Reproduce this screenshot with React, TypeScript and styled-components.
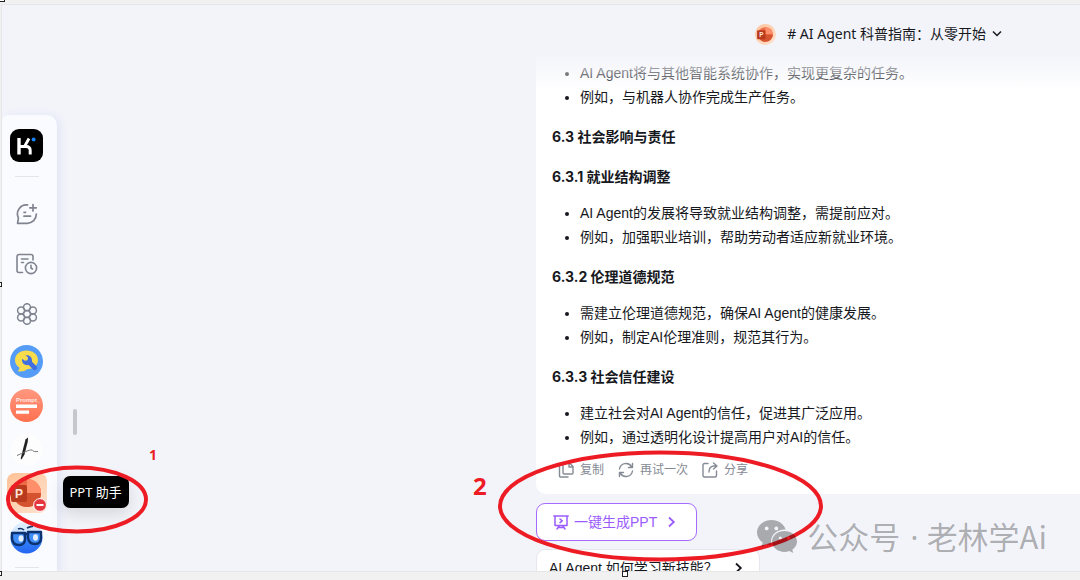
import React from "react";
import styled, { createGlobalStyle } from "styled-components";

const GlobalStyle = createGlobalStyle`
  * { box-sizing: border-box; }
  body {
    margin: 0;
    background: #f1f1f1;
    color: #16181d;
    font: 14px/24px "Liberation Sans", "Noto Sans CJK SC", sans-serif;
  }
  button { font: inherit; color: inherit; border: 0; padding: 0; background: none; cursor: pointer; white-space: nowrap; }
`;

const Frame = styled.div`
  position: relative;
  height: 100vh;
  display: flex;
  flex-direction: column;
  padding: 4px 0 8px 1px;
  overflow: hidden;
`;

const Workspace = styled.div`
  flex: 1;
  min-height: 0;
  display: grid;
  grid-template-columns: 55px minmax(0, 479fr) minmax(0, 544fr);
  overflow: hidden;
  background: #f3f4fa;
  border: solid #e6e6e8;
  border-width: 1px 0 1px 1px;
`;

const Sidebar = styled.nav`
  display: flex;
  flex-direction: column;
  align-items: center;
  margin-top: 110px;
  padding: 14px 6px 0 0;
  background: #fafbff;
  border-radius: 6px 10px 0 0;
  box-shadow: 3px 0 8px rgba(60, 90, 200, 0.09);
`;

const LogoLink = styled.a`
  display: block;
  height: 33px;
  svg { display: block; }
`;

const Divider = styled.hr`
  width: 24px;
  height: 1px;
  margin: 14px 0 12px;
  border: 0;
  background: #e4e5ea;
  flex: none;
`;

const LastDivider = styled(Divider)`
  margin: 8px 0 0;
`;

const NavButton = styled.button<{ $tall?: boolean }>`
  position: relative;
  flex: none;
  width: 40px;
  height: ${(p) => (p.$tall ? 50 : 44)}px;
  display: grid;
  place-items: center;
  color: #7f848f;
`;

const StopBadge = styled.svg`
  position: absolute;
  right: 0;
  bottom: 3px;
`;

const Tooltip = styled.span`
  position: absolute;
  left: 56px;
  top: 5px;
  z-index: 3;
  padding: 4px 7px;
  border-radius: 7px;
  background: #000;
  color: #fff;
  font: 13px/24px "Noto Sans", "Noto Sans CJK SC", sans-serif;
  box-shadow: 0 6px 16px rgba(0, 0, 0, 0.12);
`;

const Canvas = styled.div`
  padding: 404px 0 0 16px;
`;

const ScrollThumb = styled.div`
  width: 4px;
  height: 26px;
  border-radius: 2px;
  background: #c6c7ca;
`;

const Chat = styled.main`
  display: flex;
  flex-direction: column;
  align-items: flex-start;
  min-width: 0;
`;

const Header = styled.header`
  position: relative;
  align-self: stretch;
  flex: none;
  display: flex;
  justify-content: flex-end;
  height: 49px;
  padding: 9px 78px 0 0;
  &::after {
    content: "";
    position: absolute;
    inset: 100% 0 auto 0;
    height: 36px;
    background: linear-gradient(#f3f4fa, rgba(243, 244, 250, 0));
  }
`;

const TitleButton = styled.button`
  display: flex;
  align-items: center;
  height: 40px;
  font-family: "Noto Sans", "Noto Sans CJK SC", sans-serif;
  > svg:first-child { margin-right: 11px; }
  > svg:last-child { margin-left: 6px; }
`;

const Message = styled.article`
  align-self: stretch;
  flex: none;
  padding: 7px 16px 15px;
  background: #fff;
  border-bottom-left-radius: 10px;
`;

const Heading = styled.h3`
  margin: 16px 0 12px;
  font: bold 14px/24px Inter, "Noto Sans CJK SC", sans-serif;
  & + & { margin-top: 16px; }
`;

const Bullets = styled.ul`
  margin: 0;
  padding-left: 28px;
`;

const Actions = styled.div`
  display: flex;
  gap: 14px;
  margin-top: 12px;
  padding-left: 6px;
`;

const ActionButton = styled.button`
  display: flex;
  align-items: center;
  gap: 6px;
  color: #858a94;
  font-size: 12px;
  line-height: 18px;
`;

const GenerateButton = styled.button`
  display: flex;
  align-items: center;
  flex: none;
  height: 38px;
  margin-top: 9px;
  padding: 0 20px 0 16px;
  border: 1px solid #a56bff;
  border-radius: 9px;
  background: #fff;
  color: #9a5cff;
  > svg:first-child { margin-right: 5px; }
  > svg:last-child { margin-left: 10px; }
`;

const Suggestion = styled.button`
  display: flex;
  align-items: center;
  flex: none;
  gap: 16px;
  height: 38px;
  margin-top: 8px;
  padding: 0 16px 0 12px;
  border: 1px solid #e6e7ec;
  border-radius: 9px;
  background: #fff;
`;

const Markup = styled.svg`
  position: absolute;
  left: 0;
  top: 0;
  z-index: 4;
  width: 100%;
  height: 100%;
  pointer-events: none;
`;

const Note = styled.span<{ $x: number; $y: number; $size: number }>`
  position: absolute;
  left: ${(p) => p.$x}px;
  top: ${(p) => p.$y}px;
  color: #ed1c24;
  font: bold ${(p) => p.$size}px/24px "Noto Sans", sans-serif;
`;

const Watermark = styled.div`
  position: absolute;
  right: 33px;
  bottom: 22px;
  z-index: 5;
  display: flex;
  align-items: center;
  gap: 9px;
  color: rgba(0, 0, 0, 0.3);
  font: 31px/42px "Noto Sans CJK SC", sans-serif;
  white-space: nowrap;
`;

const MiddleDot = styled.span`
  margin: 0 8px 0 10px;
  font-family: "Noto Sans", sans-serif;
`;

const PptMark = ({ size, round }: { size: number; round?: boolean }) => (
  <svg width={size} height={size} viewBox="0 0 40 40">
    <defs>
      <linearGradient id="pptBg" x1="0" y1="0" x2="1" y2="1">
        <stop offset="0" stopColor="#ffc196" />
        <stop offset="1" stopColor="#ffe3cf" />
      </linearGradient>
    </defs>
    <rect width="40" height="40" rx={round ? 20 : 8} fill="url(#pptBg)" />
    <circle cx="20" cy="20" r="14" fill="#ed6c47" />
    <path d="M20 6a14 14 0 0 1 14 14H20z" fill="#ff8f6b" />
    <path d="M6 20a14 14 0 0 0 28 0z" fill="#d6532f" />
    <rect x="4" y="12" width="16" height="17" rx="2" fill="#b93a1c" />
    <text x="12" y="25" fontSize="12" fontWeight="bold" fill="#ffe6dc" textAnchor="middle" fontFamily="Liberation Sans, sans-serif">P</text>
  </svg>
);

const Line = ({ size = 16, w = 1.4, children }: { size?: number; w?: number; children: React.ReactNode }) => (
  <svg width={size} height={size} viewBox={`0 0 ${size} ${size}`} fill="none" stroke="currentColor" strokeWidth={w} strokeLinecap="round" strokeLinejoin="round">
    {children}
  </svg>
);

const Chevron = () => (
  <svg width="9" height="12" viewBox="0 0 9 12" fill="none" stroke="currentColor" strokeWidth="1.8">
    <path d="M2 1.5 6.8 6 2 10.5" />
  </svg>
);

const cells = [[11, 11], [11, 4.2], [11, 17.8], [5.1, 7.6], [16.9, 7.6], [5.1, 14.4], [16.9, 14.4]];

const sections = [
  { title: "6.3.1 就业结构调整", items: ["AI Agent的发展将导致就业结构调整，需提前应对。", "例如，加强职业培训，帮助劳动者适应新就业环境。"] },
  { title: "6.3.2 伦理道德规范", items: ["需建立伦理道德规范，确保AI Agent的健康发展。", "例如，制定AI伦理准则，规范其行为。"] },
  { title: "6.3.3 社会信任建设", items: ["建立社会对AI Agent的信任，促进其广泛应用。", "例如，通过透明化设计提高用户对AI的信任。"] },
];

export default function App() {
  return (
    <Frame>
      <GlobalStyle />
      <Workspace>
        <Sidebar>
          <LogoLink href="#" aria-label="Kimi">
            <svg width="33" height="33" viewBox="0 0 33 33">
              <rect width="33" height="33" rx="9" fill="#000" />
              <g fill="none" stroke="#fff">
                <path d="M9 9v16.500" strokeWidth="3.400" />
                <path d="M9 17.500h5.500L19 9.500" strokeWidth="2.800" />
                <path d="M13.500 17.500h2.500q4.200 0 4.200 4v4" strokeWidth="3" />
              </g>
              <circle cx="23.600" cy="10.400" r="2" fill="#1783ff" />
            </svg>
          </LogoLink>
          <Divider />
          <NavButton $tall aria-label="新建会话">
            <Line size={22} w={1.7}>
              <path d="M11.500 1.900A9 9 0 0 0 2.400 14.800L1.600 20.300H11a9 9 0 0 0 9.300-9.300" />
              <path d="M17 1.500v6.500M13.800 4.800h6.500M8 9.300h1.500M8 13.200h6.500" />
            </Line>
          </NavButton>
          <NavButton $tall aria-label="历史会话">
            <Line size={22} w={1.6}>
              <path d="M17 7V3.500a2 2 0 0 0-2-2H3a2 2 0 0 0-2 2v14a2 2 0 0 0 2 2h3.500M5.500 6h6.500M5.500 9.500h2" />
              <circle cx="15" cy="15" r="5.600" />
              <path d="M15 12.300V15l1.500 1" />
            </Line>
          </NavButton>
          <NavButton $tall aria-label="智能体">
            <Line size={22} w={1.5}>
              {cells.map(([x, y]) => (
                <circle key={`${x}-${y}`} cx={x} cy={y} r="3.500" />
              ))}
            </Line>
          </NavButton>
          <NavButton aria-label="工具助手">
            <svg width="33" height="33" viewBox="0 0 33 33">
              <circle cx="16.500" cy="16.500" r="16.500" fill="#559cf7" />
              <path d="M16.500 5.500c6.500 0 11.500 4 11.500 9.500s-5 9-11 9.300c-2 1.900-5 2.700-9.500 2 1.400-1 2-2.300 1.800-3.800C6.300 20.700 5 18 5 15c0-5.500 5-9.500 11.500-9.500z" fill="#f8dc4c" />
              <path d="m18.500 16.500 6.300 6.300" stroke="#3f6fe0" strokeWidth="4.600" strokeLinecap="round" />
              <circle cx="17" cy="15.200" r="5" fill="#3f6fe0" />
              <path d="m10.500 12.500 3.500-3.500 4 3.500-.5 2.700-2.700.5z" fill="#f8dc4c" />
            </svg>
          </NavButton>
          <NavButton aria-label="提示词助手">
            <svg width="33" height="33" viewBox="0 0 33 33">
              <defs>
                <linearGradient id="promptBg" x2="0" y2="1">
                  <stop offset="0" stopColor="#ff9880" />
                  <stop offset="1" stopColor="#ff704f" />
                </linearGradient>
              </defs>
              <circle cx="16.500" cy="16.500" r="16.500" fill="url(#promptBg)" />
              <text x="6" y="13" fontSize="6" fontWeight="bold" fill="#ffe9e3" fontFamily="Liberation Sans, sans-serif">Prompt_</text>
              <path d="M6 15.500h21v3.500H6zM6 21.500h13v3.200H6z" fill="#fff" />
            </svg>
          </NavButton>
          <NavButton aria-label="写作助手">
            <svg width="33" height="33" viewBox="0 0 33 33">
              <circle cx="16.500" cy="16.500" r="16" fill="#fdfdfd" />
              <path d="M15.500 6.500 18 4.500l-.2 4-3.300 13-3 5-.8-1 2-8z" fill="#222" />
              <path d="M7 22.500c6-2.500 12-6 15-5.500 1.500.5 0 2 6 1.500" fill="none" stroke="#777" strokeWidth="1" />
            </svg>
          </NavButton>
          <NavButton aria-label="PPT 助手">
            <PptMark size={40} />
            <StopBadge width="14" height="14" viewBox="0 0 14 14">
              <circle cx="7" cy="7" r="6.400" fill="#e5373f" stroke="#fff" strokeWidth="1" />
              <path d="M3.500 7h7" stroke="#fff" strokeWidth="2" />
            </StopBadge>
            <Tooltip role="tooltip">PPT 助手</Tooltip>
          </NavButton>
          <NavButton aria-label="学习助手">
            <svg width="33" height="33" viewBox="0 0 33 33">
              <defs>
                <linearGradient id="glassBg" x2="0" y2="1">
                  <stop offset="0" stopColor="#e6f2ff" />
                  <stop offset=".3" stopColor="#cfe5ff" />
                  <stop offset=".45" stopColor="#3a8dff" />
                  <stop offset="1" stopColor="#2464f0" />
                </linearGradient>
              </defs>
              <circle cx="16.500" cy="16.500" r="16" fill="url(#glassBg)" />
              <path d="M8 8q3-1.500 6 1M17 7q4-2 6-1.500" fill="none" stroke="#15345f" strokeWidth="1.600" />
              <path d="M2 12h13v6q0 6-6 6t-7-6zM18 11h13v6q0 6-6 6t-7-6z" fill="#3f8df8" stroke="#0d3270" strokeWidth="2.400" strokeLinejoin="round" />
              <path d="M14 14q2-2 4-.5" fill="none" stroke="#0d3270" strokeWidth="2.200" />
              <ellipse cx="11" cy="17.500" rx="2.500" ry="3.200" fill="#e4f0ff" />
              <ellipse cx="25.500" cy="16.500" rx="2.500" ry="3.200" fill="#e4f0ff" />
            </svg>
          </NavButton>
          <LastDivider />
        </Sidebar>
        <Canvas>
          <ScrollThumb />
        </Canvas>
        <Chat>
          <Header>
            <TitleButton>
              <PptMark size={21} round />
              # AI Agent 科普指南：从零开始
              <svg width="10" height="8" viewBox="0 0 10 8" fill="none" stroke="currentColor" strokeWidth="1.500">
                <path d="M1 1.500 5 5.500 9 1.500" />
              </svg>
            </TitleButton>
          </Header>
          <Message>
            <Bullets>
              <li>AI Agent将与其他智能系统协作，实现更复杂的任务。</li>
              <li>例如，与机器人协作完成生产任务。</li>
            </Bullets>
            <Heading>6.3 社会影响与责任</Heading>
            {sections.map((s) => (
              <React.Fragment key={s.title}>
                <Heading>{s.title}</Heading>
                <Bullets>
                  {s.items.map((t) => (
                    <li key={t}>{t}</li>
                  ))}
                </Bullets>
              </React.Fragment>
            ))}
            <Actions>
              <ActionButton>
                <Line>
                  <path d="M6.500 1h5L15 4.500V11a1 1 0 0 1-1 1H6.500a1.500 1.500 0 0 1-1.500-1.500v-8A1.500 1.500 0 0 1 6.500 1zM11 1v4h4M1.500 4v10a1 1 0 0 0 1 1H10" />
                </Line>
                复制
              </ActionButton>
              <ActionButton>
                <Line>
                  <path d="M1.500 7A6.600 6.600 0 0 1 13.500 4.500M14.500 1.500v4h-4M14.500 9A6.600 6.600 0 0 1 2.500 11.500M1.500 14.500v-4h4" />
                </Line>
                再试一次
              </ActionButton>
              <ActionButton>
                <Line>
                  <path d="M6 1.500H2.500a1.500 1.500 0 0 0-1.500 1.500v10.500A1.500 1.500 0 0 0 2.500 15h10.500a1.500 1.500 0 0 0 1.500-1.500V9M11.500 1l3.500 3-3.500 3M15 4h-3.500Q7 4.500 7 10" />
                </Line>
                分享
              </ActionButton>
            </Actions>
          </Message>
          <GenerateButton>
            <Line w={1.5}>
              <path d="M.8 2h14.400M2 2v9.500h12V2M7 5l2.200 1.800L7 8.600M6.500 11.500 4 15M9.500 11.500 12 15M6 13.500h4" />
            </Line>
            一键生成PPT
            <Chevron />
          </GenerateButton>
          <Suggestion>
            AI Agent 如何学习新技能？
            <Chevron />
          </Suggestion>
        </Chat>
      </Workspace>
      <Markup>
        <g fill="none" stroke="#ed1c24" strokeWidth="4">
          <ellipse cx="77" cy="499.500" rx="69" ry="32" />
          <ellipse cx="660.500" cy="506" rx="160.500" ry="53.500" />
        </g>
        <g fill="#fff" stroke="#222" strokeWidth="1">
          <rect x="-2.500" y="282.500" width="4" height="4" />
          <rect x="-2.500" y="571.500" width="4" height="4" />
          <rect x="622.500" y="571.500" width="5" height="5" />
          <rect x="-.5" y="-2.500" width="5" height="4" />
        </g>
      </Markup>
      <Note $x={149} $y={443} $size={14}>1</Note>
      <Note $x={473} $y={474} $size={24}>2</Note>
      <Watermark>
        <svg width="41" height="33" viewBox="0 0 41 33">
          <defs>
            <mask id="bubbleCut">
              <rect width="41" height="33" fill="#fff" />
              <ellipse cx="27.500" cy="21.500" rx="13.500" ry="12" fill="#000" />
            </mask>
          </defs>
          <g mask="url(#bubbleCut)">
            <path fillRule="evenodd" fill="currentColor" d="M14.500 0C22.500 0 29 5.500 29 12.500S22.500 25 14.500 25c-1.800 0-3.500-.3-5-.8L4.500 27l1.200-4.600C2.200 20.100 0 16.500 0 12.500 0 5.500 6.500 0 14.500 0zM9.700 6.500a1.900 1.900 0 1 0 0 3.800 1.900 1.900 0 0 0 0-3.800zm9.600 0a1.900 1.900 0 1 0 0 3.800 1.900 1.900 0 0 0 0-3.800z" />
          </g>
          <path fillRule="evenodd" fill="currentColor" d="M27.500 11C34.400 11 40 15.700 40 21.500c0 3.300-1.800 6.200-4.700 8.200l1 3.300-4-2c-1.500.6-3.100.9-4.800.9-6.900 0-12.500-4.600-12.500-10.400S20.600 11 27.500 11zm-4.200 5.500a1.500 1.500 0 1 0 0 3 1.500 1.500 0 0 0 0-3zm8.200 0a1.500 1.500 0 1 0 0 3 1.500 1.500 0 0 0 0-3z" />
        </svg>
        <span>
          公众号<MiddleDot>·</MiddleDot>老林学Ai
        </span>
      </Watermark>
    </Frame>
  );
}
